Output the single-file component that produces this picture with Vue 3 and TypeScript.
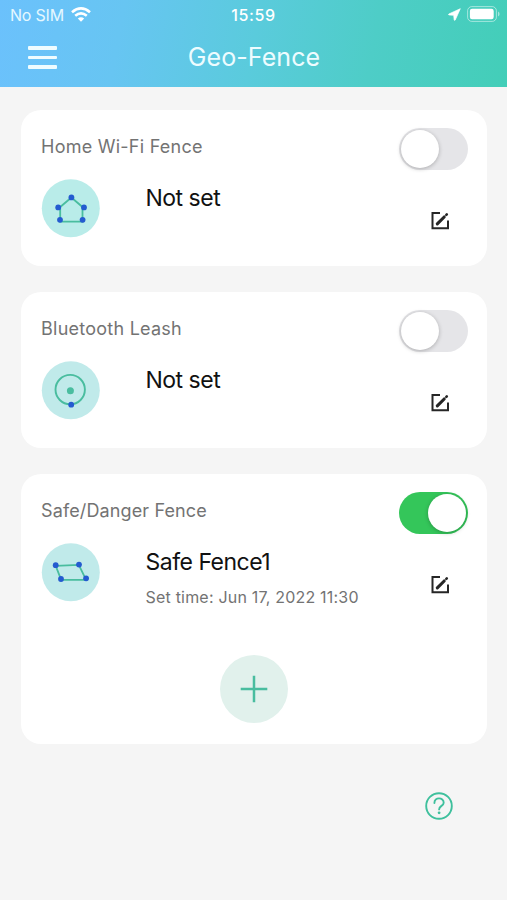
<script setup lang="ts">
import { ref } from 'vue'

type Shape = 'house' | 'circle' | 'area'

interface Fence {
  title: string
  shape: Shape
  name: string
  detail?: string
  enabled: boolean
  extendable?: boolean
}

const fences = ref<Fence[]>([
  { title: 'Home Wi-Fi Fence', shape: 'house', name: 'Not set', enabled: false },
  { title: 'Bluetooth Leash', shape: 'circle', name: 'Not set', enabled: false },
  {
    title: 'Safe/Danger Fence',
    shape: 'area',
    name: 'Safe Fence1',
    detail: 'Set time: Jun 17, 2022 11:30',
    enabled: true,
    extendable: true,
  },
])
</script>

<template>
  <div class="screen">
    <header class="header">
      <div class="status">
        <div class="carrier">
          <span>No SIM</span>
          <svg class="wifi" width="20" height="15" viewBox="0 0 20 15">
            <g fill="none" stroke="#fff" stroke-width="2.6">
              <path d="M1 5.3Q10 -2.4 19 5.3" />
              <path d="M4.2 8.8Q10 4 15.8 8.8" />
            </g>
            <path d="M6.8 11.5Q10 8.8 13.2 11.5L10 14.7Z" fill="#fff" />
          </svg>
        </div>
        <span class="clock">15:59</span>
        <div class="indicators">
          <svg width="13" height="13" viewBox="0 0 13 13">
            <path d="M12.3 .7L7.2 12.1Q6.7 12.8 6.2 12L5.7 7.3L.9 6.9Q0 6.5.8 6Z" fill="#fff" stroke="#fff" stroke-width=".7" stroke-linejoin="round" />
          </svg>
          <svg class="battery" width="33" height="16" viewBox="0 0 33 16">
            <rect x=".6" y=".6" width="28.8" height="14.8" rx="4.2" fill="none" stroke="#fff" stroke-opacity=".5" stroke-width="1" />
            <rect x="2.9" y="2.8" width="23.8" height="10.4" rx="2.2" fill="#fff" />
            <path d="M31 5.5Q32.6 6.3 32.6 8T31 10.5Z" fill="#fff" fill-opacity=".5" />
          </svg>
        </div>
      </div>
      <nav class="navbar">
        <button class="menu" aria-label="Menu"><i></i><i></i><i></i></button>
        <h1>Geo-Fence</h1>
      </nav>
    </header>

    <main class="cards">
      <section v-for="fence in fences" :key="fence.title" class="card">
        <div class="card-head">
          <h2 :class="fence.shape">{{ fence.title }}</h2>
          <button
            class="toggle"
            :class="{ on: fence.enabled }"
            role="switch"
            :aria-checked="fence.enabled"
            @click="fence.enabled = !fence.enabled"
          ><i></i></button>
        </div>
        <div class="card-row">
          <svg class="badge" width="59" height="59" viewBox="0 0 59 59">
            <circle cx="29.8" cy="29.2" r="29" :fill="fence.shape === 'house' ? '#b9ece9' : '#c0eaea'" />
            <g v-if="fence.shape === 'house'">
              <path d="M30.4 18.5L41.5 28V42.6H19.2V28Z" fill="none" stroke="#49bd9f" stroke-width="1.8" />
              <g fill="#245bd0">
                <circle cx="30.4" cy="18.4" r="2.9" />
                <circle cx="43" cy="28.4" r="2.9" />
                <circle cx="41.6" cy="40.8" r="2.9" />
                <circle cx="19" cy="40.8" r="2.9" />
                <circle cx="17.2" cy="28.4" r="2.9" />
              </g>
            </g>
            <g v-else-if="fence.shape === 'circle'">
              <circle cx="29.2" cy="28.6" r="14.7" fill="none" stroke="#49bd9f" stroke-width="1.9" />
              <circle cx="29.4" cy="29.7" r="3.5" fill="#49bd9f" />
              <circle cx="30.2" cy="43.7" r="2.9" fill="#245bd0" />
            </g>
            <g v-else>
              <path d="M14.7 22.8L37.8 21.8L45.1 36.9H20.2Z" fill="none" stroke="#49bd9f" stroke-width="1.8" />
              <g fill="#245bd0">
                <circle cx="14.7" cy="22.2" r="2.9" />
                <circle cx="38" cy="21.6" r="2.9" />
                <circle cx="45.1" cy="35.3" r="2.9" />
                <circle cx="20" cy="36" r="2.9" />
              </g>
            </g>
          </svg>
          <div class="info">
            <p class="name" :class="fence.shape">{{ fence.name }}</p>
            <p v-if="fence.detail" class="detail">{{ fence.detail }}</p>
          </div>
          <button class="edit" aria-label="Edit">
            <svg width="19" height="19" viewBox="0 0 19 19" fill="none" stroke="#262626" stroke-width="2">
              <path d="M9 1.9H1.5V17.2H17V9.5" />
              <path d="M6.3 12.9L13.2 6" stroke-width="3.1" stroke-linecap="round" />
              <path d="M15.3 3.9L15.8 3.4" stroke-width="2.6" stroke-linecap="round" />
            </svg>
          </button>
        </div>
        <button v-if="fence.extendable" class="add" aria-label="Add fence">
          <svg width="28" height="28" viewBox="0 0 28 28"><path d="M14 .7V27.3M.7 14H27.3" stroke="#49bd9f" stroke-width="2.5" /></svg>
        </button>
      </section>
    </main>

    <button class="help" aria-label="Help">
      <svg width="28" height="28" viewBox="0 0 28 28" fill="none" stroke="#3fc09d" stroke-width="1.9" stroke-linecap="round">
        <circle cx="14" cy="14" r="12.8" />
        <path d="M9.4 11.1C9.4 4.7 18.7 5 18.7 10.7C18.7 14 14.1 13.8 14.1 17.4" />
        <circle cx="14.1" cy="20.8" r="1.4" fill="#3fc09d" stroke="none" />
      </svg>
    </button>
  </div>
</template>

<style>
body {
  margin: 0;
  background: #f5f5f5;
}
</style>

<style scoped>
.screen {
  display: flex;
  flex-direction: column;
  box-sizing: border-box;
  min-height: 900px;
  background: #f5f5f5;
  font-family: Inter, "Liberation Sans", sans-serif;
}

button {
  display: block;
  padding: 0;
  border: 0;
  background: none;
}

h1,
h2,
p {
  margin: 0;
  font-weight: 400;
  white-space: nowrap;
}

.header {
  height: 87px;
  color: #fff;
  background: linear-gradient(100deg, #6bc1fc 0%, #67c5f2 24%, #5acbdc 50%, #4ecdc7 73%, #43ceb8 100%);
}

.status {
  display: grid;
  grid-template-columns: 1fr auto 1fr;
  align-items: center;
  height: 29px;
  padding: 0 7px 0 10px;
  font-size: 16px;
}

.carrier {
  display: flex;
  align-items: center;
  gap: 7px;
  color: #e5f8ff;
  letter-spacing: -0.2px;
}

.clock {
  margin-right: 3px;
  font-weight: 500;
  letter-spacing: 0.6px;
}

.indicators {
  display: flex;
  align-items: center;
  justify-content: flex-end;
  gap: 6px;
  margin-top: -1px;
}

.navbar {
  display: grid;
  grid-template-columns: 1fr auto 1fr;
  align-items: center;
  height: 55px;
  padding: 0 27px 0 28px;
}

.menu {
  display: flex;
  flex-direction: column;
  gap: 6px;
  width: 29px;
  padding-top: 2px;
}

.menu i {
  height: 3.4px;
  border-radius: 1px;
  background: #effcff;
}

h1 {
  color: #edfcff;
  font-size: 25px;
  letter-spacing: 0.1px;
}

.cards {
  display: flex;
  flex-direction: column;
  gap: 26px;
  padding: 23px 20px 0 21px;
}

.card {
  box-sizing: border-box;
  min-height: 156px;
  padding: 17px 19px 21px 20px;
  border-radius: 20px;
  background: #fff;
}

.card-head {
  display: flex;
  justify-content: space-between;
  height: 52px;
}

h2 {
  color: #737373;
  font-size: 18px;
  line-height: 40px;
  letter-spacing: 0.25px;
}

h2.area {
  letter-spacing: 0.13px;
}

.toggle {
  box-sizing: border-box;
  width: 69px;
  height: 42px;
  margin-top: 0.5px;
  padding: 2px;
  border-radius: 21px;
  background: #e5e5e8;
}

.toggle i {
  display: block;
  width: 38px;
  height: 38px;
  border-radius: 50%;
  background: #fff;
  box-shadow: 0 1px 4px rgba(0, 0, 0, 0.25);
}

.toggle.on {
  background: #34c65a;
}

.toggle.on i {
  margin-left: 27px;
}

.card-row {
  display: flex;
  align-items: flex-start;
}

.badge {
  flex: none;
}

.info {
  flex: 1;
  padding: 4px 0 0 45.5px;
}

.name {
  color: #111;
  font-size: 23px;
  line-height: 30px;
  letter-spacing: -0.5px;
}

.detail {
  margin-top: 8px;
  color: #737373;
  font-size: 16px;
  line-height: 24px;
  letter-spacing: 0.2px;
}

.edit {
  margin: 32px 18px 0 0;
}

.add {
  display: flex;
  align-items: center;
  justify-content: center;
  width: 68px;
  height: 68px;
  margin: 46px auto 0;
  border-radius: 50%;
  background: #e1f1ec;
  transform: translateX(-1px);
}

.help {
  align-self: flex-end;
  margin: 48px 54px 0 0;
}
</style>
